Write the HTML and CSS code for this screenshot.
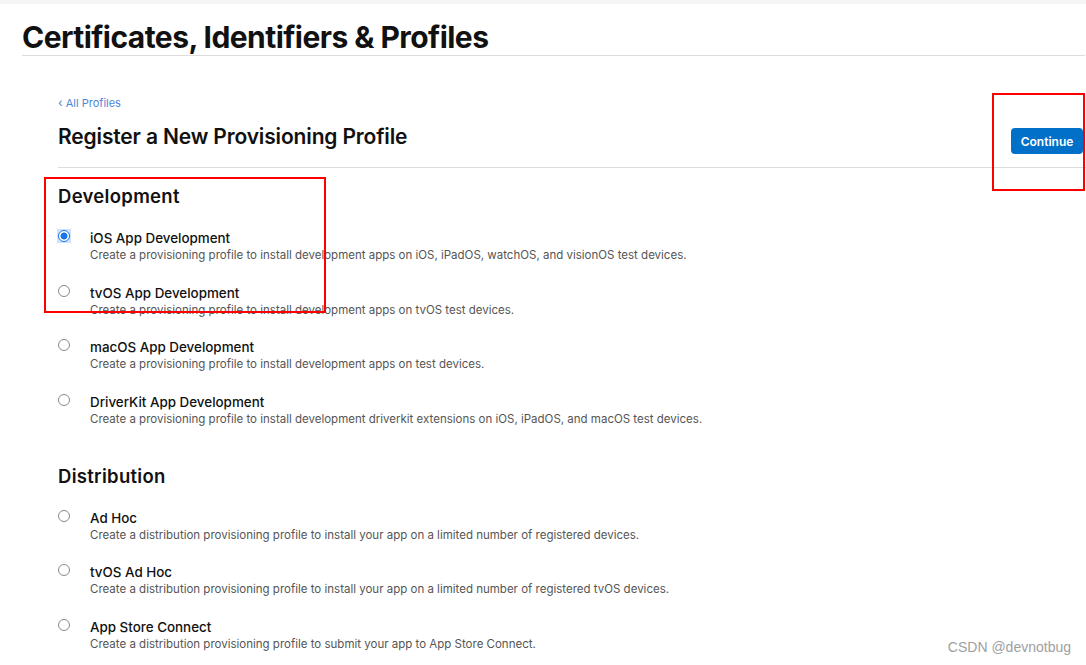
FILE: index.html
```html
<!DOCTYPE html>
<html lang="en">
<head>
<meta charset="utf-8">
<title>Certificates, Identifiers &amp; Profiles</title>
<link rel="stylesheet" href="styles.css">
</head>
<body>
<div class="topbar"></div>
<header class="header">
  <h1 class="page-title">Certificates, Identifiers &amp; Profiles</h1>
</header>
<main class="main">
  <a class="back-link" href="#"><span class="chev">&#8249;</span> All Profiles</a>
  <div class="titlebar">
    <h2 class="sub-title">Register a New Provisioning Profile</h2>
    <button class="btn-continue" type="button">Continue</button>
  </div>

  <section class="group">
    <h3 class="group-title">Development</h3>
    <ul class="options">
      <li class="option">
        <span class="radio-cell"><span class="focus"><span class="radio checked"></span></span></span>
        <div class="option-text">
          <div class="option-name">iOS App Development</div>
          <div class="option-desc">Create a provisioning profile to install development apps on iOS, iPadOS, watchOS, and visionOS test devices.</div>
        </div>
      </li>
      <li class="option">
        <span class="radio-cell"><span class="radio"></span></span>
        <div class="option-text">
          <div class="option-name">tvOS App Development</div>
          <div class="option-desc">Create a provisioning profile to install development apps on tvOS test devices.</div>
        </div>
      </li>
      <li class="option">
        <span class="radio-cell"><span class="radio"></span></span>
        <div class="option-text">
          <div class="option-name">macOS App Development</div>
          <div class="option-desc">Create a provisioning profile to install development apps on test devices.</div>
        </div>
      </li>
      <li class="option">
        <span class="radio-cell"><span class="radio"></span></span>
        <div class="option-text">
          <div class="option-name">DriverKit App Development</div>
          <div class="option-desc">Create a provisioning profile to install development driverkit extensions on iOS, iPadOS, and macOS test devices.</div>
        </div>
      </li>
    </ul>
  </section>

  <section class="group group-dist">
    <h3 class="group-title">Distribution</h3>
    <ul class="options">
      <li class="option">
        <span class="radio-cell"><span class="radio"></span></span>
        <div class="option-text">
          <div class="option-name">Ad Hoc</div>
          <div class="option-desc">Create a distribution provisioning profile to install your app on a limited number of registered devices.</div>
        </div>
      </li>
      <li class="option">
        <span class="radio-cell"><span class="radio"></span></span>
        <div class="option-text">
          <div class="option-name">tvOS Ad Hoc</div>
          <div class="option-desc">Create a distribution provisioning profile to install your app on a limited number of registered tvOS devices.</div>
        </div>
      </li>
      <li class="option">
        <span class="radio-cell"><span class="radio"></span></span>
        <div class="option-text">
          <div class="option-name">App Store Connect</div>
          <div class="option-desc">Create a distribution provisioning profile to submit your app to App Store Connect.</div>
        </div>
      </li>
    </ul>
  </section>
</main>

<div class="annot annot-dev"></div>
<div class="annot annot-btn"></div>
<div class="watermark">CSDN @devnotbug</div>
</body>
</html>
```

FILE: styles.css
```css
* { box-sizing: border-box; }
html, body { margin: 0; padding: 0; }
body {
  background: #fff;
  color: #1d1d1f;
  font-family: Inter, "Liberation Sans", Arial, sans-serif;
  width: 1086px;
  height: 665px;
  overflow: hidden;
  position: relative;
}
.topbar { height: 4px; background: #f5f5f7; }
.header { padding: 15px 1px 0 22px; }
.page-title {
  margin: 0;
  font-size: 30px;
  line-height: 36px;
  font-weight: 700;
  letter-spacing: -0.55px;
  color: #111;
  border-bottom: 1px solid #dcdcdc;
}
.main { padding: 39px 0 0 58px; }
.back-link {
  display: block;
  font-size: 11px;
  line-height: 16px;
  color: #4f86d6;
  text-decoration: none;
}
.chev { font-size: 12px; }
.titlebar {
  display: flex;
  justify-content: space-between;
  align-items: flex-start;
  margin-top: 12px;
  padding: 0 3px 13px 0;
  border-bottom: 1px solid #dcdcdc;
}
.sub-title {
  margin: 0;
  font-size: 21px;
  line-height: 28px;
  font-weight: 600;
  letter-spacing: -0.15px;
  color: #111;
}
.btn-continue {
  margin-top: 5px;
  width: 72px;
  height: 26px;
  border: 0;
  border-radius: 4px;
  background: #0070c9;
  color: #fff;
  font-family: inherit;
  font-size: 12px;
  font-weight: 600;
  padding: 0;
}
.group { padding-top: 16px; }
.group-dist { padding-top: 37px; }
.group-title {
  margin: 0 0 21px 0;
  font-size: 18.5px;
  line-height: 24px;
  font-weight: 600;
  letter-spacing: 0.3px;
  color: #111;
}
.options { list-style: none; margin: 0; padding: 0; display: flex; flex-direction: column; gap: 20.6px; }
.option { display: flex; align-items: flex-start; }
.radio-cell {
  width: 32px;
  flex: none;
  display: flex;
  padding-top: 1px;
}
.focus {
  display: block;
  padding: 1px;
  margin: -1px 0 0 -1px;
  background: #cfe2fb;
}
.radio {
  width: 12px;
  height: 12px;
  border: 1px solid #8a8a8a;
  border-radius: 50%;
  background: #fff;
  display: block;
}
.radio.checked {
  border: 1px solid #1a73e8;
  background: radial-gradient(circle, #1a73e8 0 3.2px, #fff 3.8px);
}
.option-text { display: flex; flex-direction: column; }
.option-name {
  font-size: 13.4px;
  line-height: 18px;
  font-weight: 500;
  color: #111;
}
.option-desc {
  font-size: 11.5px;
  line-height: 16px;
  color: #555;
}
.annot {
  position: absolute;
  border: 2px solid #ff0000;
}
.annot-dev { left: 44px; top: 177px; width: 282px; height: 136px; }
.annot-btn { left: 992px; top: 93px; width: 93px; height: 98px; }
.watermark {
  position: absolute;
  right: 15px;
  bottom: 10px;
  font-family: "Liberation Sans", Arial, sans-serif;
  font-size: 14px;
  color: #a0a0a0;
}
```
